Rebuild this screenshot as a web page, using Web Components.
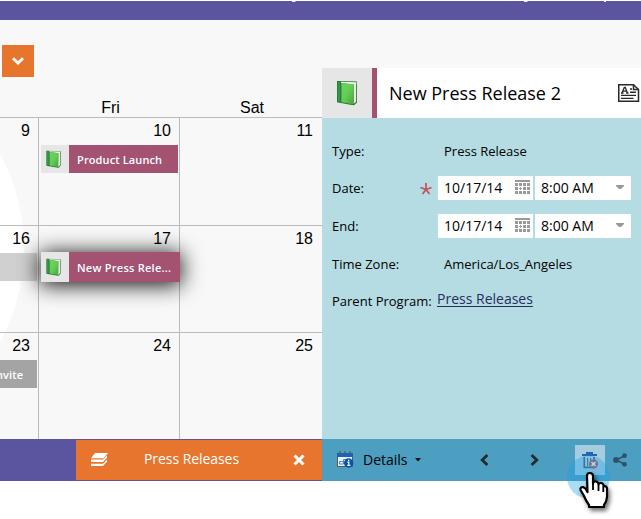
<!DOCTYPE html>
<html lang="en">
<head>
<meta charset="utf-8">
<title>Marketing calendar</title>
<style>
html,body{margin:0;background:#fff}
body{width:641px;height:519px;overflow:hidden;font-family:"Open Sans","Noto Sans",sans-serif;color:#000}
</style>
</head>
<body>
<calendar-app></calendar-app>
<script>
const define = (name, html) => customElements.define(name, class extends HTMLElement {
  constructor() {
    super();
    this.attachShadow({mode: 'open'}).innerHTML = html;
  }
});

define('book-icon', `<style>:host{display:block;width:24px;height:27px}svg{display:block;width:100%;height:100%}</style>
<svg viewBox="0 0 24 27" preserveAspectRatio="none"><defs><linearGradient id="g" x1="0" y1="0" x2="1" y2="1"><stop offset="0" stop-color="#68d95a"/><stop offset=".5" stop-color="#63cc55"/><stop offset="1" stop-color="#41a63b"/></linearGradient></defs>
<path d="M2 1 L22 1.6 22 22.5 19 25.3 14 24.4 2 22.3Z" fill="#2b6b2b"/>
<path d="M6 1.8 L21.4 2.2 21.3 4 18.5 4.6 6 3Z" fill="#f2f5ee"/><path d="M18.8 4 L21.2 2.5 21.2 21.8 18.6 24Z" fill="#e9ece6"/>
<path d="M2.6 1.8 L5.4 2.2 5.4 22.2 2.6 21.6Z" fill="#2c9a4a"/>
<path d="M6.4 3 L19 4.3 18.4 24.4 6.4 22.2Z" fill="url(#g)"/></svg>`);

define('calendar-event', `<style>
:host{display:flex;height:28px;width:137px;background:#a35272;color:#fff;font-size:11px;line-height:30px;white-space:nowrap;font-weight:600;font-family:"Open Sans",sans-serif;letter-spacing:.12px}
:host([selected]){height:30px;width:139px;box-shadow:0 2px 21px 1px rgba(0,0,0,.95);letter-spacing:.25px}
:host([selected]) span{line-height:31px}
:host([muted]){background:#a4a4a4;width:37px}
:host([blank]){background:#d0d0d0;width:37px}
.i{flex:none;width:28px;background:#e6e6e6;display:grid;place-items:center}
book-icon{width:17px;height:19px;margin-right:3px}
span{margin-left:8px}
:host([muted]) .i,:host([blank]) .i{display:none}
:host([muted]) span{margin-left:-4px}
</style><div class="i"><book-icon></book-icon></div><span><slot></slot></span>`);

define('day-cell', `<style>
:host{display:block;box-sizing:border-box;border-right:1px solid #bbb;border-bottom:1px solid #bbb;min-width:0;min-height:0;padding:4px 8px 0 2px;font:16px/18px "Liberation Sans",sans-serif}
:host([last]){border-right:0;padding-right:9px}
:host([first]){padding-left:0}
:host([bottom]){border-bottom:0}
.n{text-align:right}
.e{padding-top:var(--gap,5px)}
</style><div class="n"><slot name="day"></slot></div><div class="e"><slot></slot></div>`);

define('month-grid', `<style>
:host{display:block;height:419px;width:322px;background:radial-gradient(circle 400px at -171px 228px,#fff 0 194.5px,#f8f8f8 195.5px);overflow:hidden}
.top{padding:25px 0 0 2px;box-sizing:border-box;height:78px}
.drop{width:32px;height:32px;background:#e8752d;display:grid;place-items:center}
.w{display:grid;grid-template-columns:39px 141px 142px;height:20px;box-sizing:border-box;border-bottom:1px solid #bbb;font:16px/19px "Liberation Sans",sans-serif;text-align:center}
.w span{padding-left:2px}
.g{display:grid;grid-template-columns:39px 141px 142px;grid-template-rows:108px 107px 106px}
</style>
<div class="top"><div class="drop"><svg width="14" height="10"><path d="M2 2.2 L7 7 12 2.2" fill="none" stroke="#fff" stroke-width="2.8"/></svg></div></div>
<div class="w"><span></span><span>Fri</span><span>Sat</span></div>
<div class="g">
<day-cell first><span slot="day">9</span></day-cell>
<day-cell><span slot="day">10</span><calendar-event>Product Launch</calendar-event></day-cell>
<day-cell last><span slot="day">11</span></day-cell>
<day-cell first><span slot="day">16</span><calendar-event blank></calendar-event></day-cell>
<day-cell style="--gap:4px;position:relative"><span slot="day">17</span><calendar-event selected>New Press Rele...</calendar-event></day-cell>
<day-cell last><span slot="day">18</span></day-cell>
<day-cell first bottom><span slot="day">23</span><calendar-event muted>nvite</calendar-event></day-cell>
<day-cell bottom><span slot="day">24</span></day-cell>
<day-cell last bottom><span slot="day">25</span></day-cell>
</div>`);

define('program-bar', `<style>
:host{display:flex;width:322px;height:42px;background:#5b549f;box-sizing:border-box;padding:1px 0 1px 76px}
div{flex:1;background:#e8752d;display:flex;align-items:center;color:#fff;padding-left:14px;font-size:14px}
svg{flex:none}
span{margin-left:36px;width:97px;white-space:nowrap;line-height:38px;margin-top:-2px;letter-spacing:-.06px}
.x{margin-left:52px}
</style><div><svg width="18" height="14" fill="#fff"><path d="M5 0H18L13.5 5.2H1Z"/><path d="M1 6.5H13L17 2.5V4.7L13 9H1Z"/><path d="M1 10.7H13L17 6.7V8.7L13 13H1Z"/></svg><span>Press Releases</span><svg class="x" width="12" height="12"><path d="M1.5 1.5 L10.5 10.5 M10.5 1.5 L1.5 10.5" stroke="#fff" stroke-width="3"/></svg></div>`);

define('date-time', `<style>
:host{display:flex;gap:2px;height:24px;font-size:14px;line-height:24px}
div{background:#fff;display:flex;flex:none;box-sizing:border-box;padding-left:6px;justify-content:space-between;white-space:nowrap}
.d{width:95px;padding-right:3px}.t{width:96px;padding-right:7px}
svg{margin-top:4px}
</style><div class="d"><slot name="date"></slot><svg width="15" height="14" fill="#999"><path d="M0 0H15V2H0Z"/><path d="M0 3H3V6H0ZM4 3H7V6H4ZM8 3H11V6H8ZM12 3H15V6H12ZM0 7H3V10H0ZM12 7H15V10H12ZM8 7H11V10H8ZM0 11H3V14H0ZM4 11H7V14H4ZM8 11H11V14H8ZM12 11H15V14H12ZM5 7H6V8H7V9H6V10H5V9H4V8H5Z"/></svg></div>
<div class="t"><slot name="time"></slot><svg width="8" height="14"><path d="M0 5H8V6L5 9H3L0 6Z" fill="#999"/></svg></div>`);

define('field-row', `<style>
:host{display:grid;grid-template-columns:88px 18px 1fr;height:24px;line-height:24px;font-size:13px;align-items:start;white-space:nowrap}
svg{visibility:hidden;margin-top:7px}
:host([required]) svg{visibility:visible}
.v{min-width:0}
</style><label><slot name="label"></slot></label><svg width="12" height="12"><path d="M6 0V6.5M.5 4.5 6 6.5 11.5 4.5M6 6.5 2.5 11M6 6.5 9.5 11" fill="none" stroke="#c2555a" stroke-width="1.8"/></svg><div class="v"><slot></slot></div>`);

define('panel-header', `<style>
:host{display:flex;height:50px;background:#fff;align-items:center;overflow:hidden}
.i{flex:none;width:50px;height:50px;background:#e6e6e6;border-right:5px solid #a35272;display:grid;place-items:center}
h1{font-size:18px;font-weight:400;margin:0 0 0 12px;width:229px;line-height:48px;white-space:nowrap}
svg{flex:none}
</style><div class="i"><book-icon></book-icon></div><h1><slot></slot></h1>
<svg width="22" height="18" fill="none" stroke="#282828" stroke-width="1.5"><path d="M.75 .75H15.5L20.5 5.5V17.2H.75Z"/><path d="M15.5 .5V5.5H21" /><path d="M4 9 6.3 3.5H7.2L9.5 9M5 7.2H9M3 9H5.5M8.2 9H10.5" stroke-width="1.3"/><path d="M12 5H14M12 8.3H18M3 11.4H18M3 14.4H15.5" stroke-width="1.4"/></svg>`);

define('panel-footer', `<style>
:host{display:flex;align-items:center;height:42px;background:#4c9fc0;font-size:14px}
.cal{margin-left:15px}
span{margin-left:9px;line-height:42px;width:46px;white-space:nowrap}
.c{margin-left:6px}.p{margin-left:59px}.n{margin-left:41px}
.trash{margin-left:36px;width:30px;height:30px;background:#a4cee0;display:grid;place-items:center}
.share{margin-left:8px}
svg{flex:none}
</style>
<svg class="cal" width="17" height="18"><path d="M.5 6V15.5H15.5V6" fill="#e6f1f6" stroke="#55595c"/><path d="M0 2H16V6H0Z" fill="#1d63b5"/><path d="M3 0V3.5M8 0V3.5M13 0V3.5" stroke="#555" stroke-width="1.2"/><path d="M2.5 13V10.5H6.5V13ZM6.5 12V8.5H9" fill="none" stroke="#5a86a8"/><circle cx="11.6" cy="12" r="4.7" fill="#0754ad"/><path d="M10.3 11.2H11.8V14.2M10.2 14.3H13.4" fill="none" stroke="#fff" stroke-width="1.2"/><path d="M11 8.7H12.4V10H11Z" fill="#fff"/></svg>
<span>Details</span><svg class="c" width="6" height="4"><path d="M0 0H6L3 3.5Z" fill="#111"/></svg>
<svg class="p" width="9" height="12"><path d="M7.4 1 2.2 6 7.4 11" fill="none" stroke="#222b30" stroke-width="2.8"/></svg>
<svg class="n" width="9" height="12"><path d="M1.6 1 6.8 6 1.6 11" fill="none" stroke="#222b30" stroke-width="2.8"/></svg>
<div class="trash"><svg width="16" height="17"><path d="M4 1H11M0 3H15" stroke="#2763ae" stroke-width="1.8"/><path d="M2.3 5V15.3H12V5" fill="#c8dbe6" stroke="#465e70" stroke-width="1.7"/><path d="M5.6 6V14M8.6 6V14" stroke="#52697a" stroke-width="1.3"/><circle cx="11.5" cy="12" r="4.5" fill="#b64f57"/><path d="M9.5 10 13.5 14M13.5 10 9.5 14" stroke="#fff" stroke-width="1.5"/></svg></div>
<svg class="share" width="15" height="14" fill="#2f5364"><path d="M12 2.7 3 7 12 11.3" fill="none" stroke="#2f5364" stroke-width="1.6"/><circle cx="3" cy="7" r="2.9"/><circle cx="11.5" cy="2.7" r="2.4"/><circle cx="11.5" cy="11.3" r="2.4"/></svg>`);

define('detail-panel', `<style>
:host{display:flex;flex-direction:column;width:319px;height:413px;margin-top:48px}
.b{flex:1;background:#b5dce3;padding:21px 0 0 10px;display:flex;flex-direction:column;gap:13px;overflow:hidden;box-sizing:border-box}
.more{margin-top:1px}
.t{padding-left:6px}
a{display:block;font-size:14px;color:#292d5e;text-decoration:underline;text-underline-offset:2px;margin-left:-1px;margin-top:-2px}
</style>
<panel-header>New Press Release 2</panel-header>
<div class="b">
<field-row><span slot="label">Type:</span><div class="t">Press Release</div></field-row>
<field-row required><span slot="label">Date:</span><date-time><span slot="date">10/17/14</span><span slot="time">8:00 AM</span></date-time></field-row>
<field-row class="more"><span slot="label">End:</span><date-time><span slot="date">10/17/14</span><span slot="time">8:00 AM</span></date-time></field-row>
<field-row class="more"><span slot="label">Time Zone:</span><div class="t">America/Los_Angeles</div></field-row>
<field-row><span slot="label">Parent Program:</span><a>Press Releases</a></field-row>
</div>
<panel-footer></panel-footer>`);

define('hand-pointer', `<style>:host{display:block;position:absolute;left:566px;top:452px;width:70px;height:65px;pointer-events:none}svg{overflow:visible}</style>
<svg width="70" height="65"><circle cx="22.5" cy="25" r="21.5" fill="#1aa0e8" fill-opacity=".36"/>
<path d="M21 24 Q21 21 23.5 21 Q27 21 27 24 V32 Q27 29 30 29.5 Q32.5 30 32.5 32.5 Q34 30 36.5 31.5 Q38 33 37.5 34.5 Q40 33.5 41 36 L41 45 Q40.5 50 38 53 V55 H23 V53 Q20 49 17.5 43 L14.5 38 Q14 35 17 35 Q20 36 21.5 40Z" fill="#fff" stroke="#000" stroke-width="2.2" stroke-linejoin="round" style="filter:drop-shadow(2px 3px 2px rgba(0,0,0,.55))"/>
<path d="M27 31V38M32.5 33V39M37.3 35V40" stroke="#000" stroke-width="1.8"/></svg>`);

define('calendar-app', `<style>
:host{display:block;position:relative;width:641px;height:519px;background:#fff;padding-top:1px;box-sizing:border-box;overflow:hidden}
header{height:19px;background:#5b549f}
header svg{display:block}
main{display:flex;height:461px;background:linear-gradient(#f8f8f8 419px,#fff 419px)}
</style>
<header><svg width="641" height="2" fill="#e9e7f5"><path d="M292 0H296L295 1H292ZM524 0H528L527 1H524ZM604 0H606V1H604Z"/></svg></header>
<main><div><month-grid></month-grid><program-bar></program-bar></div><detail-panel></detail-panel></main>
<hand-pointer></hand-pointer>`);
</script>
</body>
</html>
